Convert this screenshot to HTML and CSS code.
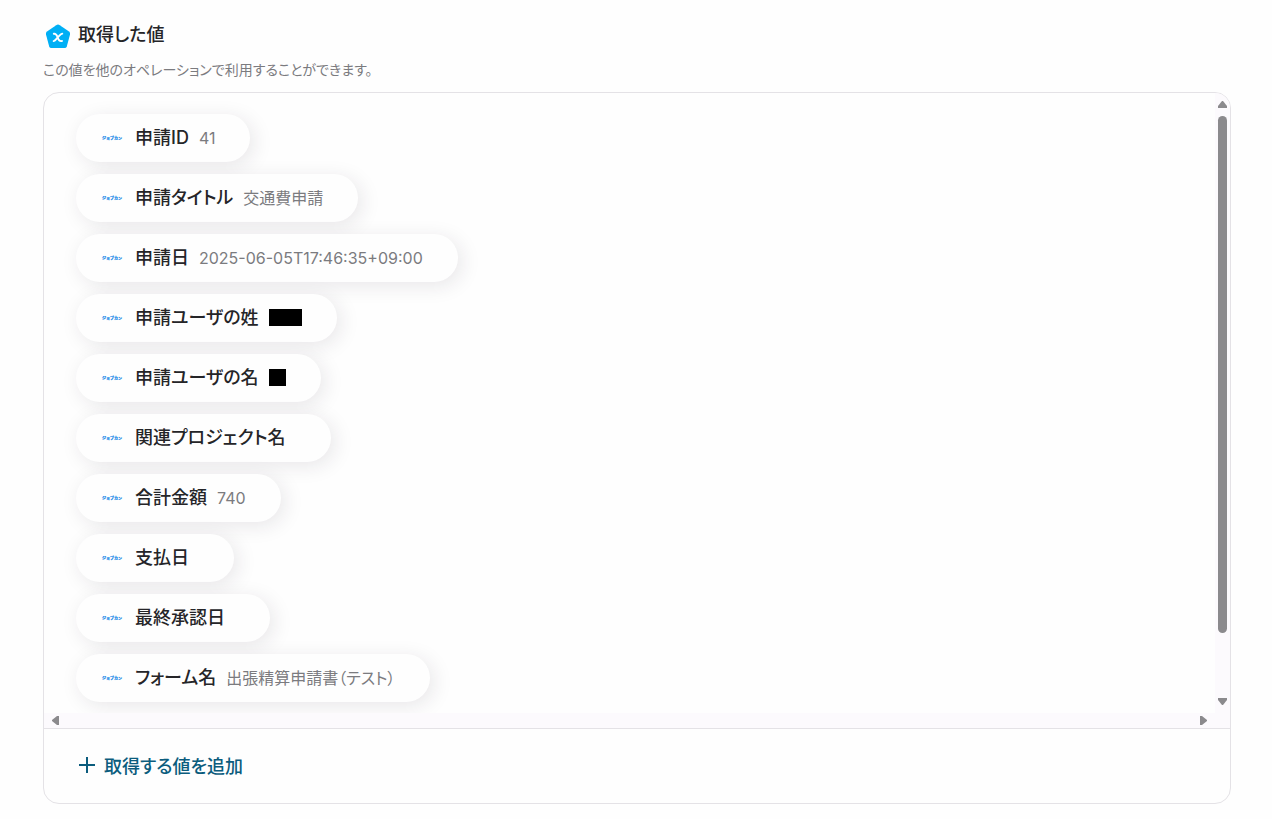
FILE: index.html
```html
<!DOCTYPE html>
<html lang="ja">
<head>
    <meta charset="UTF-8">
    <meta name="viewport" content="width=device-width, initial-scale=1.0">
    <title>取得した値</title>
    <link rel="stylesheet" href="styles.css">
</head>
<body>
    <main class="section">
        <div class="header">
            <svg class="header-icon" viewBox="0 0 26 26" aria-hidden="true">
                <path d="M11.2 1.2 Q13 0 14.8 1.2 L24 7.500 Q25.5 8.600 25 10.500 L21.8 22.500 Q21.3 24 19.7 24 L6.3 24 Q4.700 24 4.200 22.500 L1 10.500 Q.5 8.600 2 7.500 Z" fill="#00aff5"/>
                <path d="M8.800 9.800 C11 9.300 11.500 10.600 12.500 12.900 C13.600 15.800 14.200 17.500 17 17 M17.300 9.600 C15.600 10 14.600 11.600 13.600 12.500 M12.200 13.900 C11.200 15 10.400 16.700 8.600 17.100" fill="none" stroke="#fff" stroke-width="1.900" stroke-linecap="round"/>
            </svg>
            <h1>取得した値</h1>
        </div>
        <p class="description">この値を他のオペレーションで利用することができます。</p>

        <div class="panel">
            <div class="scroll-area">
                <ul class="value-list">
                    <li class="value-item">
                        <svg class="logo" viewBox="0 0 24 24"><text x="12" y="14">ジョブカン</text></svg>
                        <span class="label">申請ID</span>
                        <span class="value">41</span>
                    </li>
                    <li class="value-item">
                        <svg class="logo" viewBox="0 0 24 24"><text x="12" y="14">ジョブカン</text></svg>
                        <span class="label">申請タイトル</span>
                        <span class="value">交通費申請</span>
                    </li>
                    <li class="value-item">
                        <svg class="logo" viewBox="0 0 24 24"><text x="12" y="14">ジョブカン</text></svg>
                        <span class="label">申請日</span>
                        <span class="value">2025-06-05T17:46:35+09:00</span>
                    </li>
                    <li class="value-item">
                        <svg class="logo" viewBox="0 0 24 24"><text x="12" y="14">ジョブカン</text></svg>
                        <span class="label">申請ユーザの姓</span>
                        <span class="masked masked-long"></span>
                    </li>
                    <li class="value-item">
                        <svg class="logo" viewBox="0 0 24 24"><text x="12" y="14">ジョブカン</text></svg>
                        <span class="label">申請ユーザの名</span>
                        <span class="masked"></span>
                    </li>
                    <li class="value-item">
                        <svg class="logo" viewBox="0 0 24 24"><text x="12" y="14">ジョブカン</text></svg>
                        <span class="label">関連プロジェクト名</span>
                    </li>
                    <li class="value-item">
                        <svg class="logo" viewBox="0 0 24 24"><text x="12" y="14">ジョブカン</text></svg>
                        <span class="label">合計金額</span>
                        <span class="value">740</span>
                    </li>
                    <li class="value-item">
                        <svg class="logo" viewBox="0 0 24 24"><text x="12" y="14">ジョブカン</text></svg>
                        <span class="label">支払日</span>
                    </li>
                    <li class="value-item">
                        <svg class="logo" viewBox="0 0 24 24"><text x="12" y="14">ジョブカン</text></svg>
                        <span class="label">最終承認日</span>
                    </li>
                    <li class="value-item">
                        <svg class="logo" viewBox="0 0 24 24"><text x="12" y="14">ジョブカン</text></svg>
                        <span class="label">フォーム名</span>
                        <span class="value">出張精算申請書（テスト）</span>
                    </li>
                </ul>
                <div class="scrollbar-y" aria-hidden="true">
                    <svg class="arrow" viewBox="0 0 9 9"><path d="M4 1h1l4 5v2H0V6z"/></svg>
                    <div class="track"><div class="thumb"></div></div>
                    <svg class="arrow" viewBox="0 0 9 9"><path d="M0 1h9v2L5 8H4L0 3z"/></svg>
                </div>
            </div>
            <div class="scrollbar-x" aria-hidden="true">
                <svg class="arrow" viewBox="0 0 9 9"><path d="M8 0v9H6L1 5V4l5-4z"/></svg>
                <svg class="arrow" viewBox="0 0 9 9"><path d="M1 0v9h2l5-4V4L3 0z"/></svg>
            </div>
            <div class="footer">
                <button type="button" class="add-btn">
                    <svg class="plus" viewBox="0 0 18 18" aria-hidden="true"><path d="M9 1v16M1 9h16"/></svg>
                    取得する値を追加
                </button>
            </div>
        </div>
    </main>
</body>
</html>
```

FILE: styles.css
```css
* {
    box-sizing: border-box;
}
body {
    margin: 0;
    background: #fefefe;
    color: #252528;
    font-family: Inter, "Noto Sans CJK JP", sans-serif;
    font-feature-settings: "palt";
}
.section {
    padding: 20px 41px 15px 43px;
}
.header {
    display: flex;
    align-items: center;
    gap: 7px;
    height: 30px;
    padding-left: 2px;
}
.header-icon {
    width: 26px;
    height: 26px;
    margin-top: 4px;
}
h1 {
    margin: 0;
    font-size: 18px;
    font-weight: 500;
    line-height: 30px;
}
.description {
    margin: 8px 0 10px;
    font-size: 14px;
    line-height: 24px;
    color: #7b7b7f;
}
.panel {
    border: 1px solid #e4e2e6;
    border-radius: 16px;
    overflow: hidden;
}
.scroll-area {
    display: flex;
    overflow: hidden;
}
.value-list {
    flex: 1;
    display: flex;
    flex-direction: column;
    align-items: flex-start;
    gap: 12px;
    margin: 0;
    padding: 21px 32px 11px;
    list-style: none;
}
.value-item {
    display: flex;
    align-items: center;
    height: 48px;
    padding: 0 35px 0 24px;
    border-radius: 24px;
    background: #fefefe;
    box-shadow: 4px 4px 20px rgba(40, 25, 50, 0.1);
}
.logo {
    width: 24px;
    height: 24px;
    margin-right: 11px;
}
.logo text {
    font-family: "Noto Sans CJK JP", sans-serif;
    font-feature-settings: normal;
    font-size: 4px;
    font-weight: 900;
    text-anchor: middle;
    fill: #1687e8;
    stroke: #1687e8;
    stroke-width: 0.2;
}
.label {
    margin-right: 10px;
    font-size: 18px;
    font-weight: 500;
    line-height: 24px;
}
.value {
    font-size: 16px;
    line-height: 24px;
    color: #7b7b7f;
}
.masked {
    width: 17px;
    height: 17px;
    margin-bottom: 2px;
    background: #000;
}
.masked-long {
    width: 33px;
}
.scrollbar-y {
    display: flex;
    flex-direction: column;
    align-items: center;
    width: 15px;
    padding: 7px 0;
    background: #fcfafd;
}
.arrow {
    width: 9px;
    height: 9px;
    fill: #8b8a8d;
}
.track {
    flex: 1;
    width: 9px;
    padding: 7px 0;
}
.thumb {
    height: 90%;
    border-radius: 5px;
    background: #8b8a8d;
}
.scrollbar-x {
    display: flex;
    justify-content: space-between;
    align-items: center;
    height: 15px;
    padding: 0 22px 0 7px;
    background: #fcfafd;
}
.footer {
    padding: 19px 34px 21px;
    border-top: 1px solid #e4e2e6;
}
.add-btn {
    display: flex;
    align-items: center;
    gap: 8px;
    height: 34px;
    padding: 0;
    border: none;
    background: none;
    color: #0b5c7d;
    font: inherit;
    font-feature-settings: inherit;
    font-size: 18px;
    font-weight: 500;
    cursor: pointer;
}
.plus {
    width: 18px;
    height: 18px;
    fill: none;
    stroke: #0b5c7d;
    stroke-width: 2;
}
```
